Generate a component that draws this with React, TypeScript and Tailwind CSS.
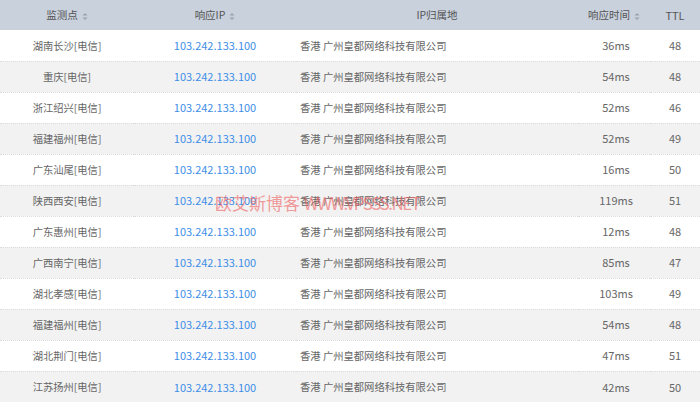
const rows = [
  ["湖南长沙[电信]", "36ms", "48"],
  ["重庆[电信]", "54ms", "48"],
  ["浙江绍兴[电信]", "52ms", "46"],
  ["福建福州[电信]", "52ms", "49"],
  ["广东汕尾[电信]", "16ms", "50"],
  ["陕西西安[电信]", "119ms", "51"],
  ["广东惠州[电信]", "12ms", "48"],
  ["广西南宁[电信]", "85ms", "47"],
  ["湖北孝感[电信]", "103ms", "49"],
  ["福建福州[电信]", "54ms", "48"],
  ["湖北荆门[电信]", "47ms", "51"],
  ["江苏扬州[电信]", "42ms", "50"],
];

function SortIcon() {
  return (
    <svg width="6" height="9" viewBox="0 0 6 9" className="ml-1 inline-block">
      <path d="M3 1 L5.5 3.6 H0.5 Z" fill="#9aa3ad" />
      <path d="M3 8 L5.5 5.4 H0.5 Z" fill="#9aa3ad" />
    </svg>
  );
}

export default function App() {
  return (
    <div
      className="relative w-[700px] h-[404px] overflow-hidden bg-white text-[10.3px] text-[#666]"
      style={{ fontFamily: '"Microsoft YaHei", "Noto Sans CJK SC", sans-serif' }}
    >
      <table className="w-full table-fixed border-collapse">
        <colgroup>
          <col className="w-[134px]" />
          <col className="w-[162px]" />
          <col className="w-[282px]" />
          <col className="w-[72px]" />
          <col className="w-[50px]" />
        </colgroup>
        <thead>
          <tr className="h-[30px] bg-[#c9d1dd] text-[#555] text-[10.5px]">
            <th className="font-normal">
              监测点
              <SortIcon />
            </th>
            <th className="font-normal">
              响应IP
              <SortIcon />
            </th>
            <th className="font-normal">IP归属地</th>
            <th className="font-normal">
              响应时间
              <SortIcon />
            </th>
            <th className="font-normal text-[11px]">TTL</th>
          </tr>
        </thead>
        <tbody>
          {rows.map((r, i) => (
            <tr
              key={i}
              className={
                "h-[31px] " +
                (i > 0 ? "border-t border-dotted border-[#dcdcdc] " : "") +
                (i % 2 === 1 ? "bg-[#f2f2f2]" : "bg-white")
              }
            >
              <td className="text-center">{r[0]}</td>
              <td className="text-center text-[#3e8ee8] text-[11px]">103.242.133.100</td>
              <td className="pl-[4px]">香港 广州皇都网络科技有限公司</td>
              <td className="text-center pl-[4px] text-[11px]">{r[1]}</td>
              <td className="text-center text-[11px]">{r[2]}</td>
            </tr>
          ))}
        </tbody>
      </table>
      <div className="absolute left-[215px] top-[190px] text-[17px] text-[rgba(238,100,100,0.65)] whitespace-nowrap pointer-events-none">
        欧艾斯博客 <span className="tracking-[-1.5px]">WWW.VPSSS.NET</span>
      </div>
    </div>
  );
}
